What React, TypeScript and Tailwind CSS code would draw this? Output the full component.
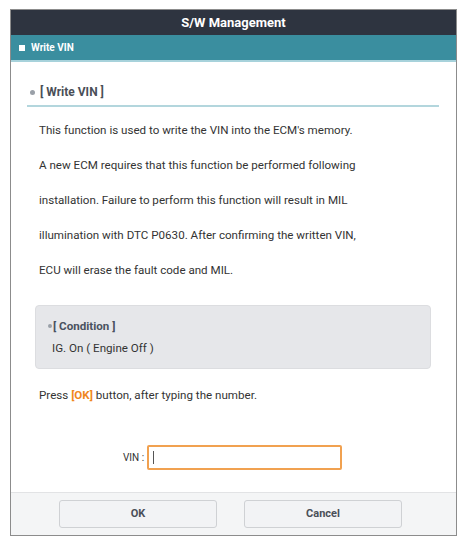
import React from "react";

export default function App() {
  const lines = [
    "This function is used to write the VIN into the ECM's memory.",
    "A new ECM requires that this function be performed following",
    "installation. Failure to perform this function will result in MIL",
    "illumination with DTC P0630. After confirming the written VIN,",
    "ECU will erase the fault code and MIL.",
  ];
  return (
    <div className="w-[467px] h-[545px] bg-white pt-[9px] pl-[10px]" style={{ fontFamily: "Roboto, 'Liberation Sans', sans-serif" }}>
      <div className="w-[447px] h-[527px] border border-[#8c8c8c] flex flex-col bg-white">
        <div className="h-[25px] bg-[#2e3440] flex items-center justify-center text-white text-[13px] font-bold">
          S/W Management
        </div>
        <div className="h-[27px] bg-[#3a8e9f] border-b-2 border-[#a7d2db] flex items-center pl-[8px] gap-[6px]">
          <div className="w-[6px] h-[6px] bg-white" />
          <span className="text-white text-[10px] font-bold">Write VIN</span>
        </div>
        <div className="flex-1 flex flex-col pl-[16px] pr-[17px]">
          <div className="mt-[22px] pb-[5px] border-b-2 border-[#b3d6dd] flex items-center pl-[3px] gap-[5px]">
            <div className="w-[5px] h-[5px] rounded-full bg-[#9aa0a8]" />
            <span className="text-[12px] font-bold text-[#4a4f58] leading-[16px]">[ Write VIN ]</span>
          </div>
          <div className="mt-[6px] pl-[12px] text-[11.6px] text-[#333] leading-[35px]">
            {lines.map((l) => (
              <div key={l}>{l}</div>
            ))}
          </div>
          <div className="mt-[17px] mx-[8px] h-[64px] bg-[#e6e7ea] border border-[#dcdde0] rounded-[4px] pl-[12px] pt-[11px] text-[11.6px] leading-[18px]">
            <div className="flex items-center gap-[1px]">
              <div className="w-[4px] h-[4px] rounded-full bg-[#9aa0a8]" />
              <span className="font-bold text-[#4a5260]">[ Condition ]</span>
            </div>
            <div className="mt-[4px] pl-[4px] text-[#333]">IG. On ( Engine Off )</div>
          </div>
          <div className="mt-[17px] pl-[12px] text-[11.6px] leading-[18px] text-[#333]">
            Press <span className="font-bold text-[#f0871e]">[OK]</span> button, after typing the number.
          </div>
          <div className="mt-[41px] flex items-center justify-center gap-[3px] pr-[1px]">
            <span className="text-[10px] text-[#333]">VIN :</span>
            <div className="w-[195px] h-[25px] border-2 border-[#f1a150] rounded-[2px] flex items-center pl-[4px]">
              <div className="w-[1px] h-[13px] bg-[#555]" />
            </div>
          </div>
        </div>
        <div className="h-[43px] bg-[#f4f5f6] border-t border-[#e2e3e5] flex items-center pl-[48px] gap-[27px]">
          <div className="w-[158px] h-[28px] bg-[#f2f3f5] border border-[#cfd1d4] rounded-[3px] flex items-center justify-center text-[11px] font-bold text-[#4a4f58]">
            OK
          </div>
          <div className="w-[158px] h-[28px] bg-[#f2f3f5] border border-[#cfd1d4] rounded-[3px] flex items-center justify-center text-[11px] font-bold text-[#4a4f58]">
            Cancel
          </div>
        </div>
      </div>
    </div>
  );
}
